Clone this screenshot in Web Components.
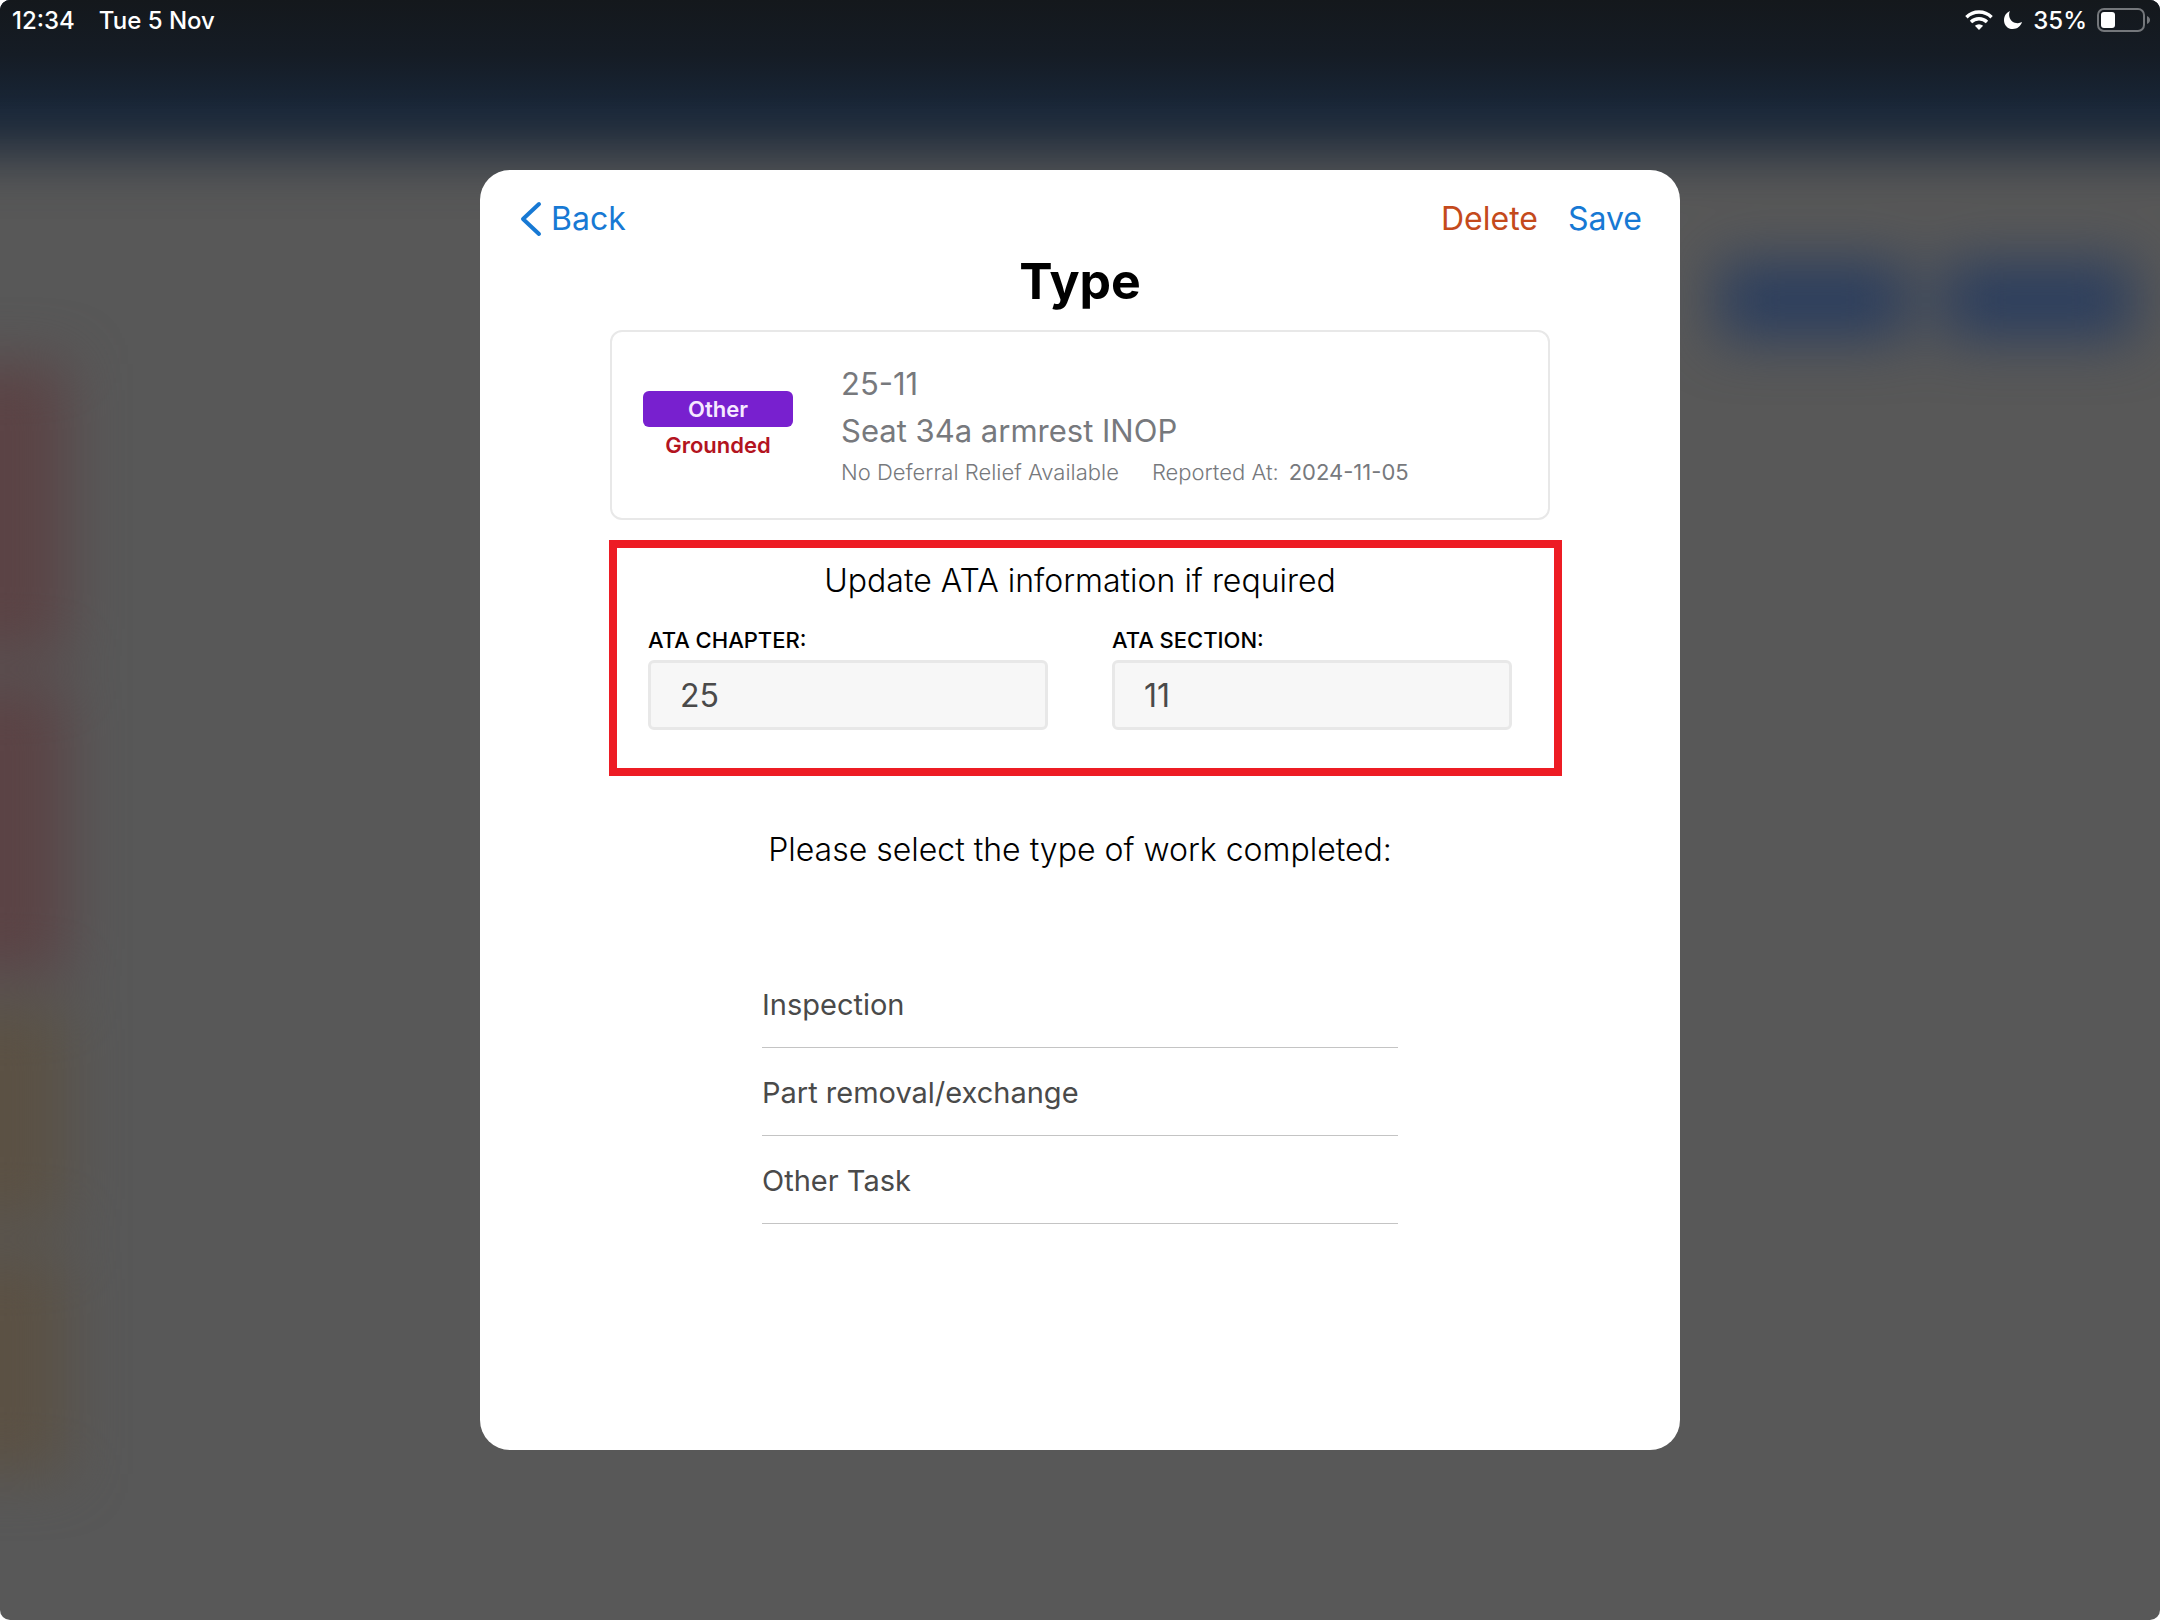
<!DOCTYPE html>
<html lang="en">
<head>
<meta charset="utf-8">
<meta name="viewport" content="width=device-width, initial-scale=1">
<title>Type</title>
<style>
    body {
        margin: 0;
        background: #fff;
        font-family: Inter, "Liberation Sans", sans-serif;
    }
</style>
</head>
<body>
<tablet-screen>
    <app-backdrop slot="backdrop"></app-backdrop>
    <status-bar slot="status" time="12:34" date="Tue 5 Nov" battery="35"></status-bar>
    <modal-sheet heading="Type">
        <nav-button slot="left" icon="back">Back</nav-button>
        <nav-button slot="right" kind="danger">Delete</nav-button>
        <nav-button slot="right">Save</nav-button>
        <defect-card code="25-11" type="Other" status="Grounded" relief="No Deferral Relief Available" reported="2024-11-05">Seat 34a armrest INOP</defect-card>
        <ata-section heading="Update ATA information if required">
            <ata-field label="ATA CHAPTER:" value="25"></ata-field>
            <ata-field label="ATA SECTION:" value="11"></ata-field>
        </ata-section>
        <work-list heading="Please select the type of work completed:">
            <work-option>Inspection</work-option>
            <work-option>Part removal/exchange</work-option>
            <work-option>Other Task</work-option>
        </work-list>
    </modal-sheet>
</tablet-screen>

<script>
class BaseElement extends HTMLElement {
    constructor() {
        super();
        this.attachShadow({mode: 'open'});
    }

    attr(name) {
        return this.getAttribute(name) || '';
    }

    connectedCallback() {
        this.shadowRoot.innerHTML = this.render();
    }
}

customElements.define('tablet-screen', class extends BaseElement {
    render() {
        return `
        <style>
            :host {
                display: flex;
                flex-direction: column;
                position: relative;
                min-height: 100vh;
                border-radius: 10px;
                overflow: hidden;
                background: #585858;
            }
            main {
                flex: 1;
                display: flex;
                align-items: center;
                justify-content: center;
                padding-bottom: 40px;
            }
        </style>
        <slot name="backdrop"></slot>
        <slot name="status"></slot>
        <main><slot></slot></main>`;
    }
});

// the page behind the sheet, dimmed and out of focus
customElements.define('app-backdrop', class extends BaseElement {
    render() {
        return `
        <style>
            :host {
                position: absolute;
                inset: 0;
                overflow: hidden;
            }
            .page {
                margin: -80px -80px 0;
                filter: blur(28px);
            }
            .bar {
                height: 232px;
                background: #182638;
            }
            .tools {
                display: flex;
                justify-content: flex-end;
                gap: 36px;
                padding: 110px 106px 0 0;
            }
            .tools i {
                width: 190px;
                height: 76px;
                background: #2a3d5e;
            }
            .strip {
                width: 146px;
                margin-bottom: 30px;
            }
            .red {
                height: 290px;
                background: #5b4345;
            }
            .red:first-of-type {
                margin-top: 26px;
            }
            .amber {
                height: 220px;
                background: #5b5144;
            }
            .shade {
                position: absolute;
                inset: 0 0 auto;
                height: 110px;
                background: linear-gradient(#14181c, #151c25 50%, #18263800);
            }
        </style>
        <div class="page">
            <div class="bar"></div>
            <nav class="tools"><i></i><i></i></nav>
            <section>
                <div class="strip red"></div>
                <div class="strip red"></div>
                <div class="strip amber"></div>
                <div class="strip amber"></div>
            </section>
        </div>
        <div class="shade"></div>`;
    }
});

customElements.define('status-bar', class extends BaseElement {
    render() {
        return `
        <style>
            :host {
                display: flex;
                justify-content: space-between;
                align-items: center;
                position: relative;
                height: 40px;
                padding: 0 9px 0 12px;
                color: #fff;
                font-size: 24px;
                font-weight: 500;
            }
            div {
                display: flex;
                align-items: center;
            }
            .clock { gap: 24px; }
            .state { gap: 10px; }
            svg { display: block; }
        </style>
        <div class="clock">
            <span>${this.attr('time')}</span>
            <span>${this.attr('date')}</span>
        </div>
        <div class="state">
            <svg width="28" height="20" viewBox="0 0 28 20" fill="none" stroke="#fff" stroke-width="3.4">
                <path d="M1.4 7.2a18 18 0 0 1 25.2 0"/>
                <path d="M6 12a11.6 11.6 0 0 1 16 0"/>
                <path d="M14 20l-4.1-4.2a6 6 0 0 1 8.2 0z" fill="#fff" stroke="none"/>
            </svg>
            <svg width="20" height="20" viewBox="0 0 20 20" fill="#fff">
                <path d="M7 1C6.100 2.800 5.900 4.600 6.300 6.500c.9 4.300 4.500 6.800 8.600 6.700 1.400 0 2.700-.4 4.100-1.100-1.200 4.200-4.700 7-9.200 7C4.700 19.100 1 15.300 1 10.200 1 6 3.400 2.500 7 1z"/>
            </svg>
            <span>${this.attr('battery')}%</span>
            <svg width="54" height="24" viewBox="0 0 54 24">
                <rect x="1" y="1" width="46" height="22" rx="6" fill="none" stroke="#74777b" stroke-width="2"/>
                <rect x="4" y="4" width="14" height="16" rx="3" fill="#fff"/>
                <path d="M50 8c4 1.500 4 6.500 0 8z" fill="#74777b"/>
            </svg>
        </div>`;
    }
});

customElements.define('modal-sheet', class extends BaseElement {
    render() {
        return `
        <style>
            :host {
                display: block;
                box-sizing: border-box;
                position: relative;
                width: 1200px;
                max-width: 100%;
                padding: 24px 38px 226px;
                border-radius: 30px;
                background: #fff;
            }
            header, .right {
                display: flex;
                align-items: center;
            }
            header { justify-content: space-between; }
            .right { gap: 30px; }
            h1 {
                margin: 8px 0 20px;
                font-size: 50px;
                line-height: 58px;
                font-weight: 700;
                text-align: center;
                color: #000;
            }
            .body {
                max-width: 940px;
                margin: 0 auto;
            }
        </style>
        <header>
            <slot name="left"></slot>
            <div class="right"><slot name="right"></slot></div>
        </header>
        <h1>${this.attr('heading')}</h1>
        <div class="body"><slot></slot></div>`;
    }
});

customElements.define('nav-button', class extends BaseElement {
    render() {
        const icon = this.attr('icon') === 'back'
            ? `<svg width="24" height="36" viewBox="0 0 24 36" fill="none" stroke="currentColor" stroke-width="4" stroke-linecap="round" stroke-linejoin="round"><path d="M21 3L5 18l16 15"/></svg>`
            : '';
        return `
        <style>
            :host {
                display: block;
                color: #1779d4;
            }
            :host([kind=danger]) { color: #c44a1c; }
            button {
                display: flex;
                align-items: center;
                gap: 9px;
                padding: 0;
                border: none;
                background-color: transparent;
                color: inherit;
                font: inherit;
                font-size: 32px;
                line-height: 50px;
            }
        </style>
        <button type="button">${icon}<slot></slot></button>`;
    }
});

customElements.define('defect-card', class extends BaseElement {
    render() {
        return `
        <style>
            :host {
                display: flex;
                align-items: center;
                box-sizing: border-box;
                gap: 48px;
                height: 190px;
                padding: 0 31px;
                border: 2px solid #e8e8e8;
                border-radius: 12px;
                color: #77797d;
            }
            .tag {
                width: 150px;
                padding-top: 4px;
                font-size: 22px;
                line-height: 36px;
                font-weight: 600;
                text-align: center;
                color: #b3141f;
            }
            .tag b {
                display: block;
                border-radius: 6px;
                background: #7820cf;
                color: #f6e9ff;
                font-weight: 600;
            }
            p {
                margin: 0;
                font-size: 31px;
                line-height: 47px;
            }
            .meta {
                display: flex;
                font-size: 22px;
                line-height: 36px;
                font-weight: 300;
            }
            .meta span { margin-right: 33px; }
            time {
                margin-left: 10px;
                font-weight: 400;
            }
        </style>
        <div class="tag"><b>${this.attr('type')}</b>${this.attr('status')}</div>
        <div>
            <p>${this.attr('code')}</p>
            <p><slot></slot></p>
            <div class="meta">
                <span>${this.attr('relief')}</span>
                Reported At: <time>${this.attr('reported')}</time>
            </div>
        </div>`;
    }
});

customElements.define('ata-section', class extends BaseElement {
    render() {
        return `
        <style>
            :host {
                display: block;
                position: relative;
                margin-top: 20px;
                padding: 16px 38px 46px;
            }
            /* marker box drawn over the section */
            .mark {
                position: absolute;
                inset: 0 -12px 0 -1px;
                border: 8px solid #ed1c24;
                pointer-events: none;
            }
            h2 {
                margin: 0 0 16px;
                font-size: 32px;
                line-height: 50px;
                font-weight: 300;
                text-align: center;
                color: #000;
            }
            .fields {
                display: grid;
                grid-template-columns: 1fr 1fr;
                gap: 64px;
            }
        </style>
        <h2>${this.attr('heading')}</h2>
        <div class="fields"><slot></slot></div>
        <div class="mark"></div>`;
    }
});

customElements.define('ata-field', class extends BaseElement {
    render() {
        return `
        <style>
            :host { display: block; }
            label {
                display: block;
                margin-bottom: 2px;
                font-size: 22px;
                line-height: 36px;
                font-weight: 500;
                color: #000;
            }
            input {
                display: block;
                box-sizing: border-box;
                width: 100%;
                height: 70px;
                padding: 0 29px;
                border: 3px solid #e8e8e8;
                border-radius: 6px;
                background: #f7f7f7;
                color: #4a4a4a;
                font: inherit;
                font-size: 32px;
            }
            input:focus { outline: none; }
        </style>
        <label for="value">${this.attr('label')}</label>
        <input id="value" type="text" inputmode="numeric" value="${this.attr('value')}">`;
    }
});

customElements.define('work-list', class extends BaseElement {
    render() {
        return `
        <style>
            :host {
                display: block;
                max-width: 636px;
                margin: 49px auto 0;
            }
            h2 {
                margin: 0 0 85px;
                font-size: 32px;
                line-height: 50px;
                font-weight: 300;
                text-align: center;
                color: #000;
            }
        </style>
        <h2>${this.attr('heading')}</h2>
        <slot></slot>`;
    }
});

customElements.define('work-option', class extends BaseElement {
    render() {
        return `
        <style>
            :host { display: block; }
            button {
                display: block;
                width: 100%;
                height: 88px;
                padding: 2px 0 0;
                border: none;
                border-bottom: 1px solid #c4c4c4;
                background-color: transparent;
                color: #4a4a4a;
                font: inherit;
                font-size: 29px;
                text-align: left;
            }
        </style>
        <button type="button"><slot></slot></button>`;
    }
});
</script>
</body>
</html>
